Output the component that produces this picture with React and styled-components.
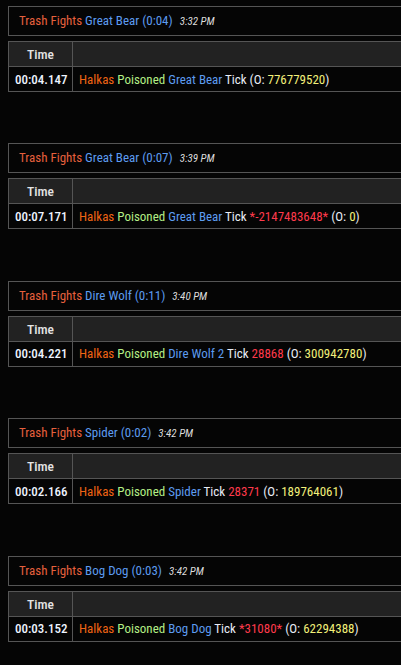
import React from "react";
import styled, { createGlobalStyle } from "styled-components";

const GlobalStyle = createGlobalStyle`
  html, body {
    margin: 0;
    padding: 0;
    background: #050505;
    overflow: hidden;
  }
  body {
    padding: 6px 0 0 8px;
    font-family: "Roboto Condensed", "Liberation Sans Narrow", Roboto, sans-serif;
    font-size: 13px;
    color: #e6e6e6;
  }
`;

const Fight = styled.section`
  width: 440px;
  margin-bottom: 51.4px;
`;

const Title = styled.div`
  display: flex;
  align-items: baseline;
  gap: 7px;
  height: 28px;
  line-height: 28px;
  padding: 0 10px;
  border: 1px solid #555;
  margin-bottom: 5px;
  white-space: nowrap;
`;

const Clock = styled.span`
  font-style: italic;
  font-size: 11px;
  color: #dcdcdc;
`;

const Table = styled.table`
  width: 100%;
  border-collapse: collapse;
  border: 1px solid #555;
  table-layout: fixed;
`;

const Head = styled.th`
  background: #222;
  color: #e4e4e4;
  font-weight: 500;
  font-size: 13.5px;
  height: 24px;
  padding: 0;
  border: 1px solid #555;
  width: ${({ $w }) => $w || "auto"};
`;

const Cell = styled.td`
  height: 24px;
  padding: 0 6px;
  border: 1px solid #555;
  white-space: nowrap;
  text-align: ${({ $center }) => ($center ? "center" : "left")};
  font-weight: ${({ $center }) => ($center ? 500 : 400)};
  color: ${({ $center }) => ($center ? "#eef4ff" : "#e6e6e6")};
`;

const Tone = styled.span`
  color: ${({ $c }) =>
    ({
      trash: "#e5603d",
      mob: "#5d9cf0",
      player: "#f06414",
      spell: "#b4ee86",
      hit: "#ff3a4c",
      over: "#f2f07a",
      plain: "#e8ecf6",
    })[$c]};
`;

const fights = [
  { mob: "Great Bear", dur: "0:04", at: "3:32 PM", time: "00:04.147", target: "Great Bear", dmg: null, over: "776779520" },
  { mob: "Great Bear", dur: "0:07", at: "3:39 PM", time: "00:07.171", target: "Great Bear", dmg: "*-2147483648*", over: "0" },
  { mob: "Dire Wolf", dur: "0:11", at: "3:40 PM", time: "00:04.221", target: "Dire Wolf 2", dmg: "28868", over: "300942780" },
  { mob: "Spider", dur: "0:02", at: "3:42 PM", time: "00:02.166", target: "Spider", dmg: "28371", over: "189764061" },
  { mob: "Bog Dog", dur: "0:03", at: "3:42 PM", time: "00:03.152", target: "Bog Dog", dmg: "*31080*", over: "62294388" },
];

export default function App() {
  return (
    <>
      <GlobalStyle />
      {fights.map((f, i) => (
        <Fight key={i}>
          <Title>
            <span>
              <Tone $c="trash">Trash Fights</Tone>{" "}
              <Tone $c="mob">
                {f.mob} ({f.dur})
              </Tone>
            </span>
            <Clock>{f.at}</Clock>
          </Title>
          <Table>
            <thead>
              <tr>
                <Head $w="63px">Time</Head>
                <Head />
              </tr>
            </thead>
            <tbody>
              <tr>
                <Cell $center>{f.time}</Cell>
                <Cell>
                  <Tone $c="player">Halkas</Tone> <Tone $c="spell">Poisoned</Tone>{" "}
                  <Tone $c="mob">{f.target}</Tone> <Tone $c="plain">Tick</Tone>{" "}
                  {f.dmg && (
                    <>
                      <Tone $c="hit">{f.dmg}</Tone>{" "}
                    </>
                  )}
                  <Tone $c="plain">(O: </Tone>
                  <Tone $c="over">{f.over}</Tone>
                  <Tone $c="plain">)</Tone>
                </Cell>
              </tr>
            </tbody>
          </Table>
        </Fight>
      ))}
    </>
  );
}
